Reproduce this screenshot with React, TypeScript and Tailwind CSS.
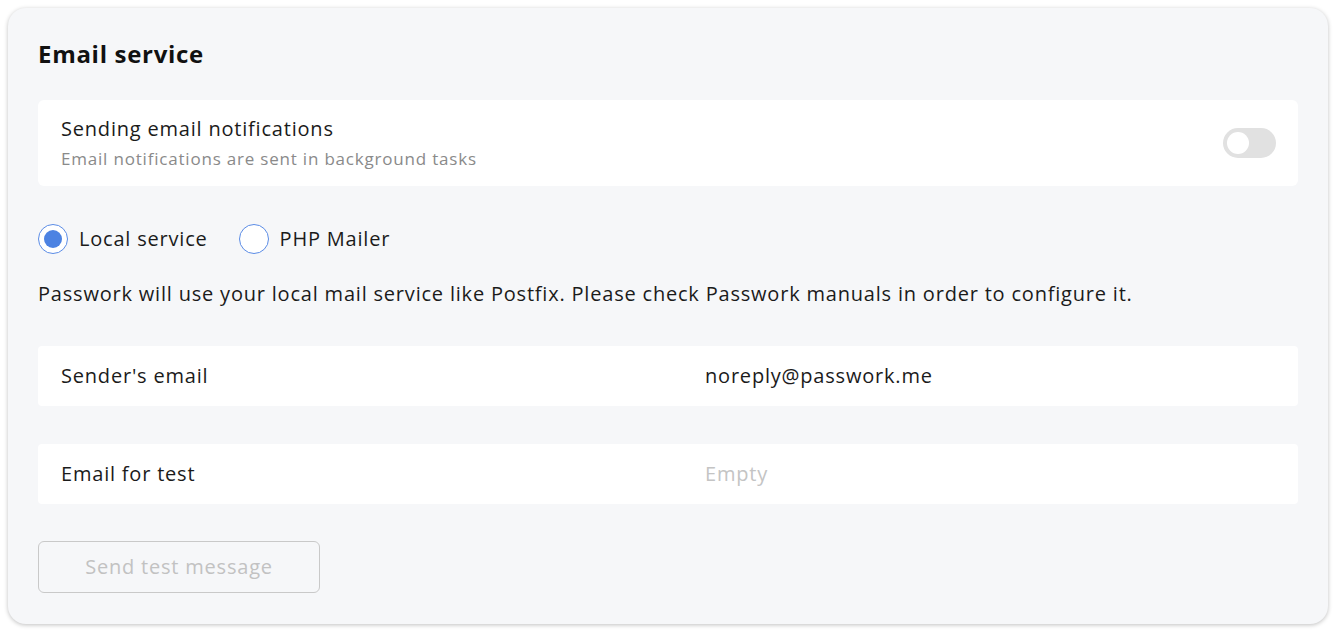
import React from 'react'

function Toggle({ on }: { on: boolean }) {
  return (
    <div className={`w-[53px] h-[30px] rounded-full p-1 flex items-center ${on ? 'bg-[#4b82e0] justify-end' : 'bg-[#e1e1e1] justify-start'}`}>
      <div className="w-[22px] h-[22px] rounded-full bg-white" />
    </div>
  )
}

function Radio({ label, checked }: { label: string; checked: boolean }) {
  return (
    <label className="flex items-center gap-[11px] cursor-pointer">
      <span className="w-[30px] h-[30px] rounded-full border border-[#5b8ce6] bg-white flex items-center justify-center">
        {checked && <span className="w-[18px] h-[18px] rounded-full bg-[#4c82e2]" />}
      </span>
      <span className="text-[20px] text-[#1b1b1b]">{label}</span>
    </label>
  )
}

function FieldRow({ label, value, placeholder }: { label: string; value?: string; placeholder?: string }) {
  return (
    <div className="bg-white rounded-[4px] h-[60px] flex items-center px-[23px]">
      <div className="w-[644px] text-[20px] text-[#1b1b1b]">{label}</div>
      {value
        ? <div className="text-[20px] text-[#1b1b1b]">{value}</div>
        : <div className="text-[20px] text-[#c4c4c4]">{placeholder}</div>}
    </div>
  )
}

export default function App() {
  return (
    <div className="w-[1336px] h-[632px] bg-white p-2 tracking-[0.8px]" style={{ fontFamily: '"Open Sans", "Noto Sans", sans-serif' }}>
      <div className="h-[616px] rounded-[18px] bg-[#f6f7f9] shadow-[0_1px_4px_rgba(0,0,0,0.25)] px-[30px] pt-[31px]">
        <h2 className="text-[24px] font-bold text-[#111] leading-[30px] tracking-[0.7px]">Email service</h2>

        {/* уведомления */}
        <div className="mt-[31px] bg-white rounded-[6px] h-[86px] flex items-center justify-between pl-[23px] pr-[22px]">
          <div>
            <div className="text-[20px] text-[#1b1b1b] leading-[28px]">Sending email notifications</div>
            <div className="text-[17px] text-[#8a8a8a] leading-[24px] mt-[4px]">Email notifications are sent in background tasks</div>
          </div>
          <Toggle on={false} />
        </div>

        <div className="mt-[38px] flex items-center gap-[31px]">
          <Radio label="Local service" checked />
          <Radio label="PHP Mailer" checked={false} />
        </div>

        <p className="mt-[26px] text-[20px] text-[#1b1b1b] leading-[28px]">
          Passwork will use your local mail service like Postfix. Please check Passwork manuals in order to configure it.
        </p>

        <div className="mt-[38px] flex flex-col gap-[38px]">
          <FieldRow label="Sender's email" value="noreply@passwork.me" />
          <FieldRow label="Email for test" placeholder="Empty" />
        </div>

        <button className="mt-[37px] w-[282px] h-[52px] rounded-[6px] border border-[#c9c9c9] text-[20px] text-[#c2c2c2] bg-transparent">
          Send test message
        </button>
      </div>
    </div>
  )
}
